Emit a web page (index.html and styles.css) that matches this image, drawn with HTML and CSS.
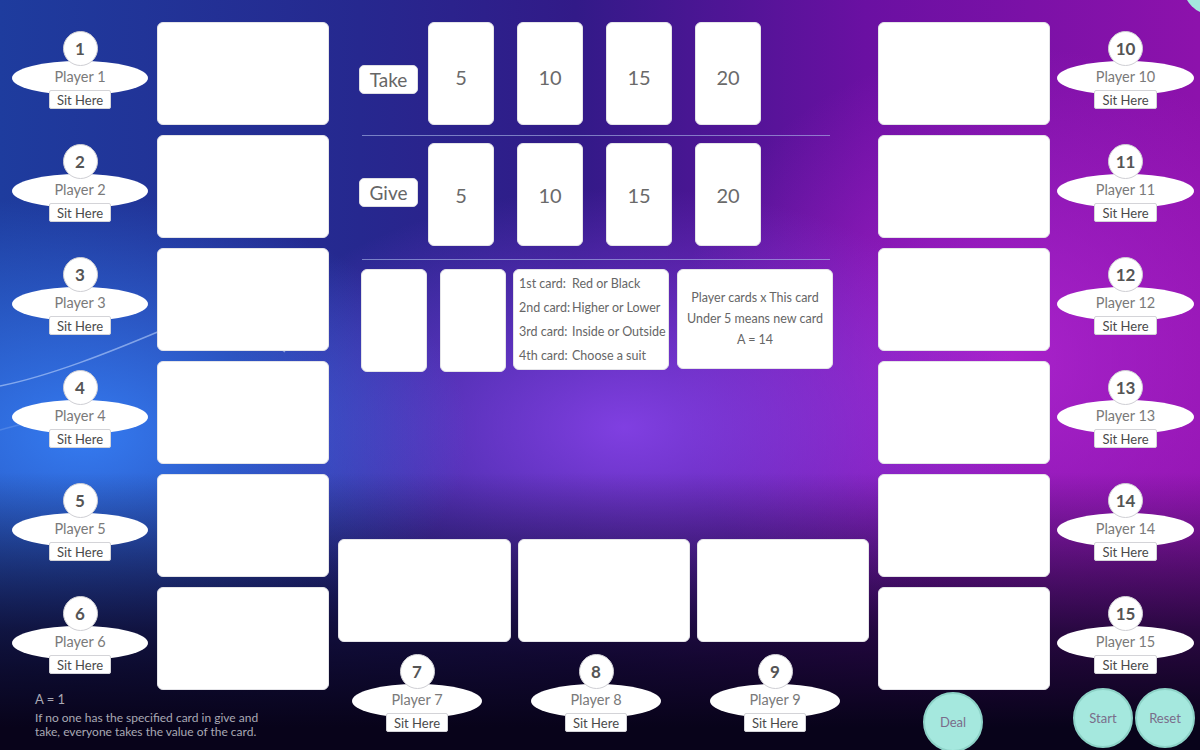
FILE: index.html
```html
<html lang="en">
<head>
    <meta charset="UTF-8">
    <meta name="viewport" content="width=device-width, initial-scale=1.0">
    <title>Ride the Bus</title>
    <link rel="stylesheet" href="styles.css">
</head>
<body>
<svg class="streaks" width="1200" height="750" viewBox="0 0 1200 750">
    <path d="M0,386 C50,376 110,352 160,331" />
    <path d="M245,327 C262,335 272,342 285,352" />
    <path d="M0,430 C40,420 70,410 100,402" class="faint" />
</svg>
<div class="corner-dot"></div>

<div class="table">
    <div class="side side-left">
        <div class="seat-row">
            <div class="seat"><div class="seat-num">1</div><div class="seat-name">Player 1</div><button class="seat-sit">Sit Here</button></div>
            <div class="card card-wide"></div>
        </div>
        <div class="seat-row">
            <div class="seat"><div class="seat-num">2</div><div class="seat-name">Player 2</div><button class="seat-sit">Sit Here</button></div>
            <div class="card card-wide"></div>
        </div>
        <div class="seat-row">
            <div class="seat"><div class="seat-num">3</div><div class="seat-name">Player 3</div><button class="seat-sit">Sit Here</button></div>
            <div class="card card-wide"></div>
        </div>
        <div class="seat-row">
            <div class="seat"><div class="seat-num">4</div><div class="seat-name">Player 4</div><button class="seat-sit">Sit Here</button></div>
            <div class="card card-wide"></div>
        </div>
        <div class="seat-row">
            <div class="seat"><div class="seat-num">5</div><div class="seat-name">Player 5</div><button class="seat-sit">Sit Here</button></div>
            <div class="card card-wide"></div>
        </div>
        <div class="seat-row">
            <div class="seat"><div class="seat-num">6</div><div class="seat-name">Player 6</div><button class="seat-sit">Sit Here</button></div>
            <div class="card card-wide"></div>
        </div>
        <div class="notes">
            <div class="notes-ace">A = 1</div>
            <p>If no one has the specified card in give and take, everyone takes the value of the card.</p>
        </div>
    </div>

    <div class="center">
        <div class="pile-row pile-take">
            <button class="pile-label">Take</button>
            <div class="pile-cards">
                <div class="card card-tall">5</div>
                <div class="card card-tall">10</div>
                <div class="card card-tall">15</div>
                <div class="card card-tall">20</div>
            </div>
        </div>
        <div class="divider divider-top"></div>
        <div class="pile-row pile-give">
            <button class="pile-label">Give</button>
            <div class="pile-cards">
                <div class="card card-tall">5</div>
                <div class="card card-tall">10</div>
                <div class="card card-tall">15</div>
                <div class="card card-tall">20</div>
            </div>
        </div>
        <div class="divider divider-bottom"></div>
        <div class="hint-row">
            <div class="card card-tall"></div>
            <div class="card card-tall second"></div>
            <div class="card rules">
                <span>1st card:</span><span>Red or Black</span>
                <span>2nd card:</span><span>Higher or Lower</span>
                <span>3rd card:</span><span>Inside or Outside</span>
                <span>4th card:</span><span>Choose a suit</span>
            </div>
            <div class="card info">
                <div>Player cards x This card</div>
                <div>Under 5 means new card</div>
                <div>A = 14</div>
            </div>
        </div>

        <div class="bottom">
            <div class="bottom-cards">
                <div class="card card-wide first"></div>
                <div class="card card-wide"></div>
                <div class="card card-wide"></div>
            </div>
            <div class="bottom-seats">
                <div class="seat seat-small"><div class="seat-num">7</div><div class="seat-name">Player 7</div><button class="seat-sit">Sit Here</button></div>
                <div class="seat seat-small"><div class="seat-num">8</div><div class="seat-name">Player 8</div><button class="seat-sit">Sit Here</button></div>
                <div class="seat seat-small"><div class="seat-num">9</div><div class="seat-name">Player 9</div><button class="seat-sit">Sit Here</button></div>
            </div>
        </div>
    </div>

    <div class="side side-right">
        <div class="seat-row">
            <div class="card card-wide"></div>
            <div class="seat"><div class="seat-num">10</div><div class="seat-name">Player 10</div><button class="seat-sit">Sit Here</button></div>
        </div>
        <div class="seat-row">
            <div class="card card-wide"></div>
            <div class="seat"><div class="seat-num">11</div><div class="seat-name">Player 11</div><button class="seat-sit">Sit Here</button></div>
        </div>
        <div class="seat-row">
            <div class="card card-wide"></div>
            <div class="seat"><div class="seat-num">12</div><div class="seat-name">Player 12</div><button class="seat-sit">Sit Here</button></div>
        </div>
        <div class="seat-row">
            <div class="card card-wide"></div>
            <div class="seat"><div class="seat-num">13</div><div class="seat-name">Player 13</div><button class="seat-sit">Sit Here</button></div>
        </div>
        <div class="seat-row">
            <div class="card card-wide"></div>
            <div class="seat"><div class="seat-num">14</div><div class="seat-name">Player 14</div><button class="seat-sit">Sit Here</button></div>
        </div>
        <div class="seat-row">
            <div class="card card-wide"></div>
            <div class="seat"><div class="seat-num">15</div><div class="seat-name">Player 15</div><button class="seat-sit">Sit Here</button></div>
        </div>
        <div class="controls">
            <button class="round-btn deal">Deal</button>
            <button class="round-btn start">Start</button>
            <button class="round-btn">Reset</button>
        </div>
    </div>
</div>
</body>
</html>
```

FILE: styles.css
```css
* {
    box-sizing: border-box;
}

html, body {
    margin: 0;
    padding: 0;
}

body {
    width: 1200px;
    height: 750px;
    overflow: hidden;
    position: relative;
    font-family: Lato, "Open Sans", sans-serif;
    color: #666;
    background:
        linear-gradient(180deg, rgba(8, 3, 26, 0) 63%, rgba(10, 4, 30, 0.75) 84%, #08031a 97%),
        radial-gradient(ellipse 32% 32% at 7% 58%, rgba(55, 130, 250, 0.9), rgba(55, 130, 250, 0)),
        radial-gradient(ellipse 34% 32% at 52% 57%, rgba(140, 70, 240, 0.85), rgba(140, 70, 240, 0)),
        radial-gradient(ellipse 28% 42% at 84% 48%, rgba(185, 40, 215, 0.75), rgba(185, 40, 215, 0)),
        linear-gradient(90deg, #1e3c9e 0%, #26288f 30%, #321a88 48%, #6a10a2 72%, #8d12ac 100%);
}

button {
    font-family: inherit;
    cursor: pointer;
}

.streaks {
    position: absolute;
    left: 0;
    top: 0;
    z-index: 0;
}

.streaks path {
    fill: none;
    stroke: rgba(200, 220, 255, 0.55);
    stroke-width: 1.5;
}

.streaks .faint {
    stroke: rgba(200, 220, 255, 0.2);
}

.corner-dot {
    position: absolute;
    top: -45px;
    right: -43px;
    width: 60px;
    height: 60px;
    border-radius: 50%;
    background: #a5e8de;
}

.table {
    position: relative;
    z-index: 1;
    display: grid;
    grid-template-columns: 338px 532px 330px;
    height: 750px;
}

/* cards */
.card {
    background: #fff;
    border: 1px solid #e4e4e8;
    border-radius: 6px;
}

.card-wide {
    width: 172px;
    height: 103px;
}

.card-tall {
    width: 66px;
    height: 103px;
    display: flex;
    align-items: center;
    justify-content: center;
    font-size: 20px;
    color: #6a6a6a;
}

.pile-take .card-tall {
    padding-top: 6px;
}

/* seats */
.seat {
    display: flex;
    flex-direction: column;
    align-items: center;
    width: 136px;
}

.seat-num {
    position: relative;
    z-index: 2;
    width: 35px;
    height: 35px;
    border-radius: 50%;
    background: #fff;
    border: 1px solid #cfcfd4;
    display: flex;
    align-items: center;
    justify-content: center;
    font-size: 17px;
    font-weight: 700;
    color: #555;
    margin-bottom: -5px;
}

.seat-name {
    width: 136px;
    height: 34px;
    border-radius: 50%;
    background: #fff;
    text-align: center;
    line-height: 32px;
    font-size: 14.5px;
    color: #7a7a7a;
}

.seat-sit {
    position: relative;
    z-index: 2;
    margin-top: -5px;
    height: 19px;
    padding: 0 7px;
    background: #fff;
    border: 1px solid #d4d4d8;
    border-radius: 2px;
    font-size: 13px;
    line-height: 16px;
    color: #4a4a4a;
}

/* side columns */
.side {
    display: flex;
    flex-direction: column;
    padding-top: 22px;
}

.seat-row {
    display: flex;
    gap: 9px;
    height: 103px;
}

.seat-row + .seat-row {
    margin-top: 10px;
}

.seat-row .seat {
    padding-top: 9px;
}

.side-left {
    padding-left: 12px;
}

.side-right {
    padding-left: 8px;
}

.side-right .seat-row {
    gap: 7px;
}

.side-right .seat {
    width: 137px;
}

.side-right .seat-name {
    width: 137px;
}

.notes {
    padding-left: 23px;
    margin-top: 1px;
    color: #a9a9b4;
}

.notes-ace {
    font-size: 13px;
    line-height: 16px;
}

.notes p {
    margin: 4px 0 0;
    width: 240px;
    font-size: 12px;
    line-height: 14px;
}

.controls {
    display: flex;
    align-items: flex-start;
    margin-top: -2px;
    padding-left: 45px;
}

.round-btn {
    width: 60px;
    height: 60px;
    border-radius: 50%;
    background: #a5e8de;
    border: 2px solid #8dd2c7;
    font-size: 13px;
    color: #7a6d8a;
    padding: 0;
}

.deal {
    margin-top: 4px;
    margin-right: 90px;
}

.start {
    margin-right: 2px;
}

/* center */
.center {
    display: flex;
    flex-direction: column;
    padding-top: 22px;
    padding-bottom: 20px;
}

.pile-row {
    display: flex;
    align-items: center;
    padding-left: 21px;
}

.pile-label {
    width: 59px;
    height: 29px;
    margin-right: 10px;
    background: #fff;
    border: 1px solid #dedee4;
    border-radius: 5px;
    font-size: 19px;
    color: #666;
    padding: 0;
}

.pile-take .pile-label {
    margin-top: 12px;
}

.pile-give .pile-label {
    margin-top: -4px;
}

.pile-cards {
    display: flex;
    gap: 23px;
}

.divider {
    width: 468px;
    height: 1px;
    margin-left: 24px;
    background: rgba(175, 190, 235, 0.6);
}

.divider-top {
    margin-top: 10px;
    margin-bottom: 7px;
}

.divider-bottom {
    margin-top: 13px;
    margin-bottom: 9px;
}

.hint-row {
    display: flex;
    gap: 7px;
    padding-left: 23px;
}

.hint-row .second {
    margin-left: 6px;
}

.rules {
    width: 156px;
    height: 101px;
    padding: 3px 0 0 5px;
    display: grid;
    grid-template-columns: 53px 1fr;
    font-size: 12.5px;
    line-height: 22.5px;
    color: #666;
    white-space: nowrap;
}

.info {
    width: 156px;
    height: 100px;
    margin-left: 1px;
    padding-top: 17px;
    text-align: center;
    font-size: 12.5px;
    line-height: 21px;
    color: #666;
}

.bottom {
    margin-top: auto;
}

.bottom-cards {
    display: flex;
    gap: 7px;
}

.bottom-cards .first {
    width: 173px;
}

.bottom-seats {
    display: grid;
    grid-template-columns: repeat(3, 158px);
    gap: 21px;
    justify-items: center;
    margin-top: 12px;
}

.seat-small,
.seat-small .seat-name {
    width: 130px;
}
```
